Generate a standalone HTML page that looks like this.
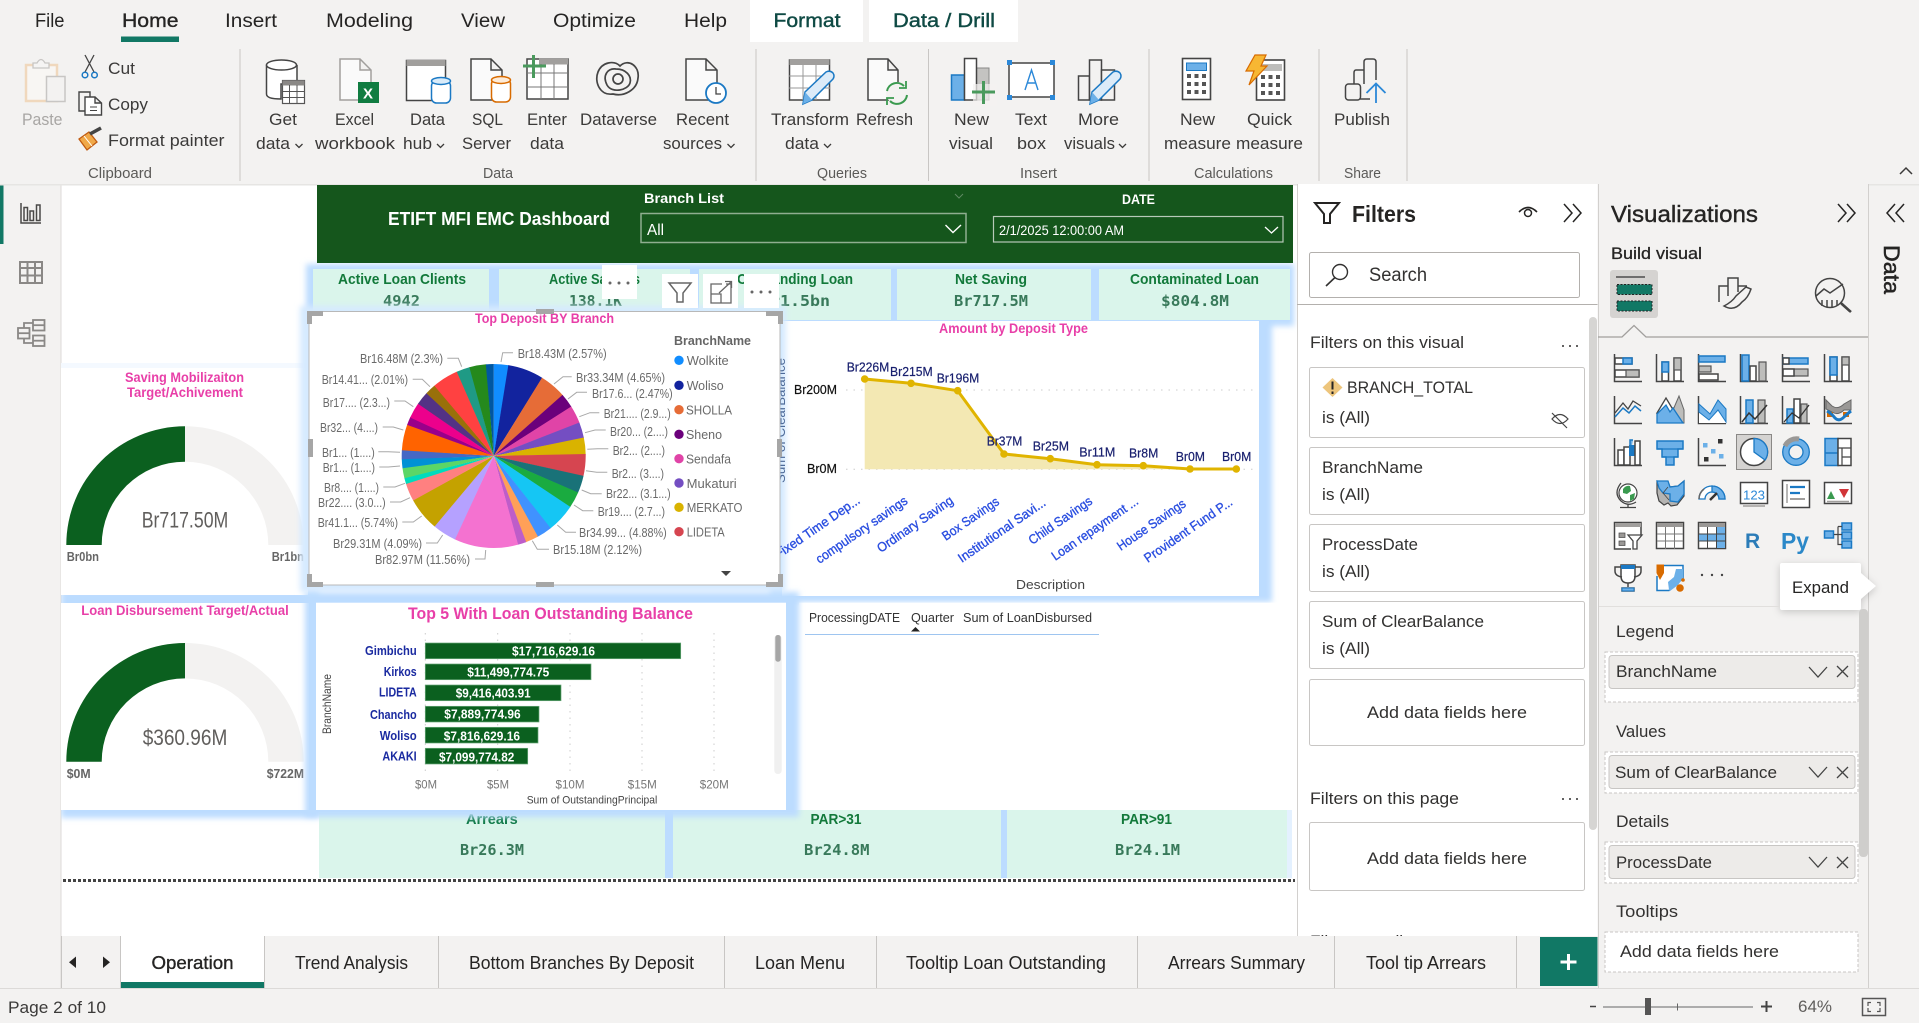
<!DOCTYPE html>
<html lang="en"><head><meta charset="utf-8"><title>ETIFT MFI EMC Dashboard - Power BI Desktop</title>
<style>
html,body{margin:0;padding:0;background:#fff;overflow:hidden;width:1919px;height:1023px}
svg{display:block;position:absolute;left:0;top:0}
text{font-family:"Liberation Sans",sans-serif;fill:#252423}
.sb{stroke:#252423;stroke-width:.35}
.p{fill:#e83fa8;font-weight:700}
.k{fill:#12793a;font-weight:700;font-size:15px}
.v{fill:#38795a;font-family:"DejaVu Sans Mono","Liberation Mono",monospace;font-weight:700;font-size:15px}
.l{fill:#6a6a6a;font-size:13px}
.n{fill:#19206f;font-size:13px;stroke:#19206f;stroke-width:.2}
.x{fill:#2a4ee0;font-size:13px;stroke:#2a4ee0;stroke-width:.35}
.y{fill:#1a2aa0;font-size:13px;font-weight:700}
.w{fill:#fff;font-size:13px;font-weight:700}
.f{font-size:17px;fill:#323130}
.r{font-size:16.5px;fill:#3b3a39}
.g{font-size:14.5px;fill:#5b5a58}
.s{fill:none;stroke:#444;stroke-width:1.5}
.b{fill:#6cb0e8;stroke:#1b79c4;stroke-width:1.5}
.a{fill:#bdbdbb;stroke:#555;stroke-width:1.2}
.h{fill:#fff;stroke:#444;stroke-width:1.5}
</style></head><body>
<svg width="1919" height="1023" viewBox="0 0 1919 1023" xmlns="http://www.w3.org/2000/svg">
<defs>
<filter id="gl" x="-10%" y="-10%" width="120%" height="120%"><feGaussianBlur stdDeviation="3"/></filter>
<clipPath id="cv"><rect x="61" y="184" width="1237" height="752"/></clipPath>
<clipPath id="fc"><rect x="1298" y="305" width="290" height="631"/></clipPath>
</defs>

<!-- base -->
<rect width="1919" height="1023" fill="#f3f2f1"/>
<rect x="61" y="184" width="1237" height="752" fill="#fff"/>
<rect x="60.5" y="184" width="1" height="804" fill="#dcdad8"/>
<rect x="0" y="184" width="3.500" height="60" fill="#117865"/>

<!-- left rail icons -->
<g fill="none" stroke="#4a4948" stroke-width="1.500">
<path d="M21 203V223H41"/>
<rect x="24" y="207.500" width="3.500" height="13"/><rect x="30" y="211" width="3.500" height="9.500"/><rect x="36.500" y="205" width="3.500" height="15.500"/>
</g>
<g fill="none" stroke="#8a8886" stroke-width="2">
<rect x="20" y="262" width="22" height="21"/><path d="M20 268H42M20 275.500H42M27.500 262V283M35 262V283"/>
</g>
<g fill="none" stroke="#8a8886" stroke-width="1.800">
<rect x="18" y="328" width="11.500" height="10.500"/><path d="M18 333.200H29.500"/>
<rect x="33" y="320" width="11.500" height="10.500"/><path d="M33 325.200H44.500"/>
<rect x="33" y="335.500" width="11.500" height="10.500"/><path d="M33 340.700H44.500"/>
<path d="M24 328V323H33M24 338.500V343H33"/>
</g>

<!-- ribbon -->
<rect x="0" y="0" width="1919" height="184" fill="#f3f2f1"/>
<rect x="0" y="184" width="1919" height="1.500" fill="#e6e5e3"/>
<rect x="750" y="0" width="113" height="42" fill="#fff"/>
<rect x="869" y="0" width="149" height="42" fill="#fff"/>
<rect x="121" y="36.500" width="58" height="5.500" fill="#117865"/>
<g font-size="19">
<text x="35" y="27" textLength="29.500" lengthAdjust="spacingAndGlyphs">File</text>
<text x="122" y="27" textLength="56.500" lengthAdjust="spacingAndGlyphs" class="sb">Home</text>
<text x="225" y="27" textLength="52" lengthAdjust="spacingAndGlyphs">Insert</text>
<text x="326" y="27" textLength="87" lengthAdjust="spacingAndGlyphs">Modeling</text>
<text x="461" y="27" textLength="44" lengthAdjust="spacingAndGlyphs">View</text>
<text x="553" y="27" textLength="83" lengthAdjust="spacingAndGlyphs">Optimize</text>
<text x="684" y="27" textLength="43" lengthAdjust="spacingAndGlyphs">Help</text>
<text x="773.500" y="27" textLength="67" lengthAdjust="spacingAndGlyphs" style="fill:#0f4a44;stroke:#0f4a44;stroke-width:.4">Format</text>
<text x="893" y="27" textLength="102" lengthAdjust="spacingAndGlyphs" style="fill:#0f4a44;stroke:#0f4a44;stroke-width:.4">Data / Drill</text>
</g>
<!-- ribbon separators -->
<g fill="#c8c6c4"><rect x="239.500" y="49" width="1" height="132"/><rect x="755.500" y="49" width="1" height="132"/><rect x="928" y="49" width="1" height="132"/><rect x="1148.500" y="49" width="1" height="132"/><rect x="1318.500" y="49" width="1" height="132"/><rect x="1406.500" y="49" width="1" height="132"/></g>
<!-- ribbon labels -->
<text x="22" y="125" class="r" textLength="40.500" lengthAdjust="spacingAndGlyphs" style="fill:#a8a6a4">Paste</text>
<text x="108" y="74" class="r" textLength="27" lengthAdjust="spacingAndGlyphs">Cut</text>
<text x="108" y="110" class="r" textLength="40" lengthAdjust="spacingAndGlyphs">Copy</text>
<text x="108" y="146" class="r" textLength="116.500" lengthAdjust="spacingAndGlyphs">Format painter</text>
<text x="269" y="125" class="r" textLength="28" lengthAdjust="spacingAndGlyphs">Get</text>
<text x="256" y="149" class="r" textLength="34" lengthAdjust="spacingAndGlyphs">data</text>
<text x="335" y="125" class="r" textLength="39" lengthAdjust="spacingAndGlyphs">Excel</text>
<text x="315" y="149" class="r" textLength="80" lengthAdjust="spacingAndGlyphs">workbook</text>
<text x="410" y="125" class="r" textLength="35" lengthAdjust="spacingAndGlyphs">Data</text>
<text x="403" y="149" class="r" textLength="29" lengthAdjust="spacingAndGlyphs">hub</text>
<text x="472" y="125" class="r" textLength="31" lengthAdjust="spacingAndGlyphs">SQL</text>
<text x="462" y="149" class="r" textLength="49" lengthAdjust="spacingAndGlyphs">Server</text>
<text x="527" y="125" class="r" textLength="40" lengthAdjust="spacingAndGlyphs">Enter</text>
<text x="530" y="149" class="r" textLength="34" lengthAdjust="spacingAndGlyphs">data</text>
<text x="580" y="125" class="r" textLength="77" lengthAdjust="spacingAndGlyphs">Dataverse</text>
<text x="676" y="125" class="r" textLength="53" lengthAdjust="spacingAndGlyphs">Recent</text>
<text x="663" y="149" class="r" textLength="59" lengthAdjust="spacingAndGlyphs">sources</text>
<text x="771" y="125" class="r" textLength="78" lengthAdjust="spacingAndGlyphs">Transform</text>
<text x="785" y="149" class="r" textLength="34" lengthAdjust="spacingAndGlyphs">data</text>
<text x="856" y="125" class="r" textLength="57" lengthAdjust="spacingAndGlyphs">Refresh</text>
<text x="954" y="125" class="r" textLength="35" lengthAdjust="spacingAndGlyphs">New</text>
<text x="949" y="149" class="r" textLength="44" lengthAdjust="spacingAndGlyphs">visual</text>
<text x="1015" y="125" class="r" textLength="32" lengthAdjust="spacingAndGlyphs">Text</text>
<text x="1017" y="149" class="r" textLength="29" lengthAdjust="spacingAndGlyphs">box</text>
<text x="1078" y="125" class="r" textLength="41" lengthAdjust="spacingAndGlyphs">More</text>
<text x="1064" y="149" class="r" textLength="51" lengthAdjust="spacingAndGlyphs">visuals</text>
<text x="1180" y="125" class="r" textLength="35" lengthAdjust="spacingAndGlyphs">New</text>
<text x="1164" y="149" class="r" textLength="67" lengthAdjust="spacingAndGlyphs">measure</text>
<text x="1247" y="125" class="r" textLength="45" lengthAdjust="spacingAndGlyphs">Quick</text>
<text x="1236" y="149" class="r" textLength="67" lengthAdjust="spacingAndGlyphs">measure</text>
<text x="1334" y="125" class="r" textLength="56" lengthAdjust="spacingAndGlyphs">Publish</text>
<text x="88" y="178" class="g" textLength="64" lengthAdjust="spacingAndGlyphs">Clipboard</text>
<text x="483" y="178" class="g" textLength="30" lengthAdjust="spacingAndGlyphs">Data</text>
<text x="817" y="178" class="g" textLength="50" lengthAdjust="spacingAndGlyphs">Queries</text>
<text x="1020" y="178" class="g" textLength="37" lengthAdjust="spacingAndGlyphs">Insert</text>
<text x="1194" y="178" class="g" textLength="79" lengthAdjust="spacingAndGlyphs">Calculations</text>
<text x="1344" y="178" class="g" textLength="37" lengthAdjust="spacingAndGlyphs">Share</text>
<!-- small chevrons -->
<g fill="none" stroke="#3b3a39" stroke-width="1.300">
<path d="M295.500 144L299 147.500L302.500 144M437 144L440.500 147.500L444 144M727.500 144L731 147.500L734.500 144M824 144L827.500 147.500L831 144M1119 144L1122.500 147.500L1126 144"/>
<path d="M1900 174L1906 168L1912 174" stroke-width="1.500"/>
</g>
<!-- ribbon icons -->
<g>
<!-- paste -->
<rect x="26" y="65" width="31" height="36" fill="#f8f6f3" stroke="#f0d8bd" stroke-width="2.500"/>
<path d="M33 68V63H37Q41 56 45 63H49V68Z" fill="#f5f4f3" stroke="#c8c6c4" stroke-width="1.300"/>
<rect x="46.500" y="76.500" width="18.500" height="25" fill="#f3f2f1" stroke="#c8c6c4" stroke-width="1.500"/>
<!-- cut -->
<path d="M85 55L94 72M94 55L85 72" stroke="#444" stroke-width="1.300" fill="none"/>
<circle cx="85" cy="75" r="2.800" fill="none" stroke="#1b79c4" stroke-width="1.500"/><circle cx="94.500" cy="75" r="2.800" fill="none" stroke="#1b79c4" stroke-width="1.500"/>
<!-- copy -->
<path d="M86 111H79V92H90V97" fill="none" stroke="#444" stroke-width="1.400"/>
<path d="M85 97H95L101.500 103V115H85Z M95 97V103H101.500" fill="#fff" stroke="#444" stroke-width="1.400"/>
<path d="M90 107H97M90 110.500H97" stroke="#444" stroke-width="1.100"/>
<!-- painter -->
<path d="M79 139L89 132L97 142L87 150Z" fill="#f0a848" stroke="#c05a10" stroke-width="1.300"/><path d="M84 136L92 146" stroke="#fff" stroke-width="1"/>
<path d="M90 134L101 128" stroke="#444" stroke-width="3.500"/>
<!-- get data -->
<path d="M266.500 65V94Q266.500 99 281 99V84H297V65" fill="#fff" stroke="#444" stroke-width="1.500"/>
<ellipse cx="281.500" cy="65" rx="15" ry="5" fill="#fff" stroke="#444" stroke-width="1.500"/>
<rect x="282.500" y="80.500" width="22" height="23" fill="#fff" stroke="#555" stroke-width="1.200"/><rect x="282.500" y="80.500" width="22" height="5" fill="#8a8886"/>
<path d="M282.500 91.500H304.500M282.500 97.500H304.500M289.500 85V103M297 85V103" stroke="#555" stroke-width="1"/>
<!-- excel -->
<path d="M340 59H360L371 70V100H340Z M360 59V70H371" fill="#fafafa" stroke="#a19f9d" stroke-width="1.500"/>
<rect x="358" y="82" width="21" height="21" fill="#107c41"/>
<text x="363" y="98.500" font-size="15" style="fill:#fff;font-weight:700">X</text>
<!-- data hub -->
<rect x="406.500" y="60.500" width="39" height="40" fill="#fff" stroke="#444" stroke-width="1.500"/><rect x="406.500" y="60" width="39" height="6" fill="#a19f9d"/>
<rect x="431.500" y="81" width="19" height="22" rx="5" fill="#fff" stroke="#1b79c4" stroke-width="1.500"/><ellipse cx="441" cy="81" rx="9.500" ry="3.500" fill="#d9ebf9" stroke="#1b79c4" stroke-width="1.500"/>
<!-- sql -->
<path d="M471 59H491L502 70V100H471Z M491 59V70H502" fill="#fafafa" stroke="#444" stroke-width="1.500"/>
<rect x="491.500" y="79" width="19" height="23" rx="5" fill="#fff" stroke="#d86b00" stroke-width="1.500"/><ellipse cx="501" cy="80" rx="9.500" ry="3.500" fill="#fdebd8" stroke="#d86b00" stroke-width="1.500"/>
<!-- enter data -->
<rect x="527" y="59" width="41" height="40" fill="#fff" stroke="#444" stroke-width="1.500"/><rect x="539" y="58.500" width="29" height="6" fill="#a19f9d"/>
<path d="M527 73H568M527 87H568M541 64V99M554 64V99" stroke="#777" stroke-width="1"/>
<path d="M523 66H546M533.500 55V78" stroke="#4a9a5d" stroke-width="3"/>
<!-- dataverse -->
<g fill="none" stroke="#444" stroke-width="1.700">
<path d="M613 94C600 96 594 82 598 72C602 62 614 60 620 66C628 58 640 66 638 78C637 90 624 97 613 94Z"/>
<path d="M607 85C602 75 608 68 616 69C626 69 632 76 630 83C628 90 612 94 607 85Z"/>
<circle cx="618" cy="79" r="5"/>
</g>
<!-- recent -->
<path d="M686 59H706L717 70V100H686Z M706 59V70H717" fill="#fafafa" stroke="#444" stroke-width="1.500"/>
<circle cx="716" cy="93" r="10" fill="#fff" stroke="#1b79c4" stroke-width="1.800"/><path d="M716 87V94H721" fill="none" stroke="#444" stroke-width="1.300"/>
<!-- transform -->
<rect x="789.500" y="60" width="40" height="40" fill="#fff" stroke="#444" stroke-width="1.500"/><rect x="789.500" y="59" width="40" height="6" fill="#a19f9d"/>
<path d="M789 76H830M789 88H830M803 65V100M816 65V100" stroke="#999" stroke-width="1"/>
<path d="M803 104L805 92L826 72Q830 70 833 73Q835 76 833 79L812 100Z" fill="#dcebf8" stroke="#1b79c4" stroke-width="1.500"/><path d="M803 104L805 92L812 100Z" fill="#6cb0e8"/>
<!-- refresh -->
<path d="M868 59H888L898 70V100H868Z M888 59V70H898" fill="#fafafa" stroke="#444" stroke-width="1.500"/><circle cx="897" cy="93" r="11" fill="#f3f2f1"/>
<path d="M887 91A10 10 0 0 1 904 86M907 95A10 10 0 0 1 890 101" fill="none" stroke="#3a9a4f" stroke-width="2"/><path d="M906 81V88H899M887 105V98H894" fill="none" stroke="#3a9a4f" stroke-width="1.800"/>
<!-- new visual -->
<rect x="976" y="68" width="13" height="32" fill="#c4c3c1" stroke="#888" stroke-width="1"/><rect x="951.500" y="75" width="13" height="25" class="b"/>
<rect x="964.500" y="58.500" width="12" height="41.500" fill="#fff" stroke="#444" stroke-width="1.500"/>
<rect x="973" y="84" width="24" height="22" fill="#f3f2f1" opacity=".7"/><path d="M972 92H995M983.500 81V104" stroke="#4a9a5d" stroke-width="3"/>
<!-- text box -->
<rect x="1009" y="63" width="45" height="34" fill="#fff" stroke="#444" stroke-width="1.500"/>
<g fill="#2b88d8"><rect x="1007" y="60" width="5" height="5"/><rect x="1050" y="60" width="5" height="5"/><rect x="1007" y="95" width="5" height="5"/><rect x="1050" y="95" width="5" height="5"/></g>
<path d="M1025 90L1031.500 70L1038 90M1027 83H1036" fill="none" stroke="#2b88d8" stroke-width="1.400"/>
<!-- more visuals -->
<g fill="#f3f2f1" stroke="#444" stroke-width="1.500"><rect x="1078.500" y="76" width="11" height="24"/><rect x="1089.500" y="60" width="12" height="40"/><rect x="1101.500" y="70" width="13" height="30"/></g>
<path d="M1090 104L1092 92L1113 72Q1117 70 1120 73Q1122 76 1120 79L1099 100Z" fill="#dcebf8" stroke="#1b79c4" stroke-width="1.500"/><path d="M1090 104L1092 92L1099 100Z" fill="#6cb0e8"/>
<!-- new measure -->
<rect x="1182.500" y="58.500" width="28" height="41" fill="#fff" stroke="#444" stroke-width="1.600"/><rect x="1186.500" y="63" width="20" height="7.500" fill="#6cb0e8" stroke="#1b79c4"/>
<g fill="#555"><rect x="1187" y="74" width="4" height="4"/><rect x="1194.500" y="74" width="4" height="4"/><rect x="1202" y="74" width="4" height="4"/><rect x="1187" y="82" width="4" height="4"/><rect x="1194.500" y="82" width="4" height="4"/><rect x="1202" y="82" width="4" height="4"/><rect x="1187" y="90" width="4" height="4"/><rect x="1194.500" y="90" width="4" height="4"/><rect x="1202" y="90" width="4" height="4"/></g>
<!-- quick measure -->
<rect x="1256.500" y="60" width="28" height="40" fill="#fff" stroke="#444" stroke-width="1.600"/><rect x="1262" y="64" width="20" height="7" fill="#bdbdbb"/>
<g fill="#555"><rect x="1261" y="75" width="4" height="4"/><rect x="1268.500" y="75" width="4" height="4"/><rect x="1276" y="75" width="4" height="4"/><rect x="1261" y="83" width="4" height="4"/><rect x="1268.500" y="83" width="4" height="4"/><rect x="1276" y="83" width="4" height="4"/><rect x="1261" y="91" width="4" height="4"/><rect x="1268.500" y="91" width="4" height="4"/><rect x="1276" y="91" width="4" height="4"/></g>
<path d="M1255 55H1266L1261 66H1267L1249 85L1254 71H1246Z" fill="#f7b733" stroke="#d86b00" stroke-width="1.200"/>
<!-- publish -->
<path d="M1364 84V62Q1364 59 1367 59H1373Q1376 59 1376 62V80M1364 70H1356Q1354 70 1354 73V84" fill="none" stroke="#444" stroke-width="1.500"/>
<rect x="1345.500" y="84" width="15" height="16" rx="3" fill="#f3f2f1" stroke="#444" stroke-width="1.500"/><path d="M1360 99H1370" stroke="#444" stroke-width="1.500"/>
<path d="M1376 103V84M1366.500 93L1376 83.500L1385.500 93" fill="none" stroke="#2b88d8" stroke-width="1.800"/>
</g>

<!-- ============ CANVAS ============ -->
<g clip-path="url(#cv)">
<!-- glows underlying -->
<g filter="url(#gl)" fill="#bcdcff">
<rect x="306" y="264" width="988" height="62"/>
<rect x="770" y="316" width="502" height="286"/>
<rect x="61" y="590" width="258" height="228"/>
</g>
<rect x="61" y="368" width="247" height="227" fill="#fff"/>
<rect x="61" y="363" width="247" height="5" fill="#f4f9ff"/>
<rect x="61" y="603" width="248" height="207" fill="#fff"/>

<!-- gauges -->
<text x="125" y="382" class="p" font-size="14" textLength="119" lengthAdjust="spacingAndGlyphs">Saving Mobilizaiton</text>
<text x="127" y="397" class="p" font-size="14" textLength="116" lengthAdjust="spacingAndGlyphs">Target/Achivement</text>
<path d="M66.300 545A118.700 118.700 0 0 1 303.700 545H268.300A83.300 83.300 0 0 0 101.700 545Z" fill="#f3f2f1"/>
<path d="M66.300 545A118.700 118.700 0 0 1 185 426.300V461.700A83.300 83.300 0 0 0 101.700 545Z" fill="#0b601f"/>
<text x="141.700" y="527.500" font-size="22" style="fill:#605e5c" textLength="86.600" lengthAdjust="spacingAndGlyphs">Br717.50M</text>
<text x="66.700" y="561" font-size="12.500" style="fill:#666;font-weight:700" textLength="32.300" lengthAdjust="spacingAndGlyphs">Br0bn</text>
<text x="271.700" y="561" font-size="12.500" style="fill:#666;font-weight:700" textLength="32.300" lengthAdjust="spacingAndGlyphs">Br1bn</text>

<text x="81.300" y="615" class="p" font-size="14" textLength="207.400" lengthAdjust="spacingAndGlyphs">Loan Disbursement Target/Actual</text>
<path d="M66.300 761.700A118.700 118.700 0 0 1 303.700 761.700H268.300A83.300 83.300 0 0 0 101.700 761.700Z" fill="#f3f2f1"/>
<path d="M66.300 761.700A118.700 118.700 0 0 1 185 643V678.400A83.300 83.300 0 0 0 101.700 761.700Z" fill="#0b601f"/>
<text x="142.700" y="745" font-size="22" style="fill:#605e5c" textLength="84.600" lengthAdjust="spacingAndGlyphs">$360.96M</text>
<text x="66.700" y="778" font-size="12.500" style="fill:#666;font-weight:700" textLength="24" lengthAdjust="spacingAndGlyphs">$0M</text>
<text x="266.700" y="778" font-size="12.500" style="fill:#666;font-weight:700" textLength="37.300" lengthAdjust="spacingAndGlyphs">$722M</text>

<!-- header -->
<rect x="317" y="185" width="976" height="78" fill="#15561c"/>
<text x="388" y="225" font-size="18.500" style="fill:#fff;font-weight:700" textLength="222" lengthAdjust="spacingAndGlyphs">ETIFT MFI EMC Dashboard</text>
<text x="644" y="203" font-size="14" style="fill:#fff;font-weight:700" textLength="80" lengthAdjust="spacingAndGlyphs">Branch List</text>
<rect x="641" y="213.500" width="325" height="29" fill="none" stroke="#8fae90" stroke-width="1.500"/>
<text x="647" y="235" font-size="16" style="fill:#fff" textLength="17" lengthAdjust="spacingAndGlyphs">All</text>
<path d="M945.500 225L953 232.500L961 225" fill="none" stroke="#fff" stroke-width="1.400"/>
<path d="M955 194L959 198L963 194" fill="none" stroke="#5f8a63" stroke-width="1"/>
<text x="1122" y="204" font-size="14" style="fill:#fff;font-weight:700" textLength="33" lengthAdjust="spacingAndGlyphs">DATE</text>
<rect x="993.500" y="216.500" width="289.500" height="25.500" fill="none" stroke="#b7c9b8" stroke-width="1.200"/>
<text x="999" y="235" font-size="14" style="fill:#fff" textLength="125" lengthAdjust="spacingAndGlyphs">2/1/2025 12:00:00 AM</text>
<path d="M1265 227L1271.500 233L1278 227" fill="none" stroke="#fff" stroke-width="1.300"/>

<!-- KPI cards -->
<g fill="#daf5eb">
<rect x="313" y="269" width="176" height="51"/><rect x="499" y="269" width="191" height="51"/><rect x="699" y="269" width="192" height="51"/><rect x="897" y="269" width="194" height="51"/><rect x="1099" y="269" width="191" height="51"/>
</g>
<text x="338" y="284" class="k" textLength="128" lengthAdjust="spacingAndGlyphs">Active Loan Clients</text>
<text x="383" y="306" class="v" textLength="37" lengthAdjust="spacingAndGlyphs">4942</text>
<text x="549" y="284" class="k" textLength="91" lengthAdjust="spacingAndGlyphs">Active Savings</text>
<text x="569" y="306" class="v" textLength="53" lengthAdjust="spacingAndGlyphs">138.1K</text>
<text x="737" y="284" class="k" textLength="116" lengthAdjust="spacingAndGlyphs">Outstanding Loan</text>
<text x="760" y="306" class="v" textLength="70" lengthAdjust="spacingAndGlyphs">Br1.5bn</text>
<text x="955" y="284" class="k" textLength="72" lengthAdjust="spacingAndGlyphs">Net Saving</text>
<text x="954" y="306" class="v" textLength="74" lengthAdjust="spacingAndGlyphs">Br717.5M</text>
<text x="1130" y="284" class="k" textLength="129" lengthAdjust="spacingAndGlyphs">Contaminated Loan</text>
<text x="1161" y="306" class="v" textLength="68" lengthAdjust="spacingAndGlyphs">$804.8M</text>

<!-- line chart -->
<rect x="782" y="321" width="477" height="275" fill="#fff"/>
<text x="939" y="333" class="p" font-size="14" textLength="149" lengthAdjust="spacingAndGlyphs">Amount by Deposit Type</text>
<path d="M846 390H1253M846 469.300H1253" stroke="#ccc" stroke-width="1" stroke-dasharray="1.500 6"/>
<text x="794" y="394" font-size="13" style="fill:#111;stroke:#111;stroke-width:.2" textLength="43" lengthAdjust="spacingAndGlyphs">Br200M</text>
<text x="807" y="473" font-size="13" style="fill:#111;stroke:#111;stroke-width:.2" textLength="30" lengthAdjust="spacingAndGlyphs">Br0M</text>
<path d="M864.700 379L911 383.300L957.700 390.700L1004 454L1050.300 458.700L1097 464.700L1143.300 465.700L1190 469L1236.300 469V469.300H864.700Z" fill="#f3e8b3"/>
<path d="M864.700 379L911 383.300L957.700 390.700L1004 454L1050.300 458.700L1097 464.700L1143.300 465.700L1190 469L1236.300 469" fill="none" stroke="#e0b400" stroke-width="3"/>
<g fill="#e0b400"><circle cx="864.700" cy="379" r="3.800"/><circle cx="911" cy="383.300" r="3.800"/><circle cx="957.700" cy="390.700" r="3.800"/><circle cx="1004" cy="454" r="3.800"/><circle cx="1050.300" cy="458.700" r="3.800"/><circle cx="1097" cy="464.700" r="3.800"/><circle cx="1143.300" cy="465.700" r="3.800"/><circle cx="1190" cy="469" r="3.800"/><circle cx="1236.300" cy="469" r="3.800"/></g>
<text x="846.700" y="371.700" class="n" textLength="42.600" lengthAdjust="spacingAndGlyphs">Br226M</text>
<text x="890" y="376" class="n" textLength="42.700" lengthAdjust="spacingAndGlyphs">Br215M</text>
<text x="936.700" y="382.700" class="n" textLength="42.600" lengthAdjust="spacingAndGlyphs">Br196M</text>
<text x="986.700" y="445.700" class="n" textLength="35.600" lengthAdjust="spacingAndGlyphs">Br37M</text>
<text x="1032.700" y="450.700" class="n" textLength="36.300" lengthAdjust="spacingAndGlyphs">Br25M</text>
<text x="1079.300" y="456.700" class="n" textLength="36" lengthAdjust="spacingAndGlyphs">Br11M</text>
<text x="1129" y="457.700" class="n" textLength="29.300" lengthAdjust="spacingAndGlyphs">Br8M</text>
<text x="1175.700" y="461" class="n" textLength="29.300" lengthAdjust="spacingAndGlyphs">Br0M</text>
<text x="1222" y="461" class="n" textLength="29.300" lengthAdjust="spacingAndGlyphs">Br0M</text>
<text transform="translate(819.500 564) rotate(-34.500)" class="x" textLength="108" lengthAdjust="spacingAndGlyphs">compulsory savings</text>
<text transform="translate(880.800 553) rotate(-34.500)" class="x" textLength="89" lengthAdjust="spacingAndGlyphs">Ordinary Saving</text>
<text transform="translate(945.800 541) rotate(-34.500)" class="x" textLength="66" lengthAdjust="spacingAndGlyphs">Box Savings</text>
<text transform="translate(961.800 563) rotate(-34.500)" class="x" textLength="103" lengthAdjust="spacingAndGlyphs">Institutional Savi...</text>
<text transform="translate(1032.300 545) rotate(-34.500)" class="x" textLength="74" lengthAdjust="spacingAndGlyphs">Child Savings</text>
<text transform="translate(1055.200 561) rotate(-34.500)" class="x" textLength="102" lengthAdjust="spacingAndGlyphs">Loan repayment ...</text>
<text transform="translate(1120.800 551) rotate(-34.500)" class="x" textLength="80" lengthAdjust="spacingAndGlyphs">House Savings</text>
<text transform="translate(1147.800 563) rotate(-34.500)" class="x" textLength="104" lengthAdjust="spacingAndGlyphs">Provident Fund P...</text>
<text x="1016" y="589" font-size="13" style="fill:#444" textLength="69" lengthAdjust="spacingAndGlyphs">Description</text>

<!-- bottom KPI row -->
<g fill="#daf5eb"><rect x="319" y="810" width="346" height="68"/><rect x="673" y="810" width="328" height="68"/><rect x="1007" y="810" width="280" height="68"/></g>
<rect x="665" y="810" width="8" height="68" fill="#bcdcff"/><rect x="1001" y="810" width="6" height="68" fill="#bcdcff"/><rect x="1287" y="810" width="5" height="68" fill="#e4f1ff"/>
<text x="466" y="824" class="k" style="fill:#107a48" textLength="51.700" lengthAdjust="spacingAndGlyphs">Arrears</text>
<text x="460" y="855" class="v" textLength="64" lengthAdjust="spacingAndGlyphs">Br26.3M</text>
<text x="810.500" y="824" class="k" textLength="51" lengthAdjust="spacingAndGlyphs">PAR&gt;31</text>
<text x="804" y="855" class="v" textLength="65.500" lengthAdjust="spacingAndGlyphs">Br24.8M</text>
<text x="1121" y="824" class="k" textLength="51" lengthAdjust="spacingAndGlyphs">PAR&gt;91</text>
<text x="1115" y="855" class="v" textLength="65" lengthAdjust="spacingAndGlyphs">Br24.1M</text>
<path d="M63 880.500H1295" stroke="#444" stroke-width="3" stroke-dasharray="3 2"/>

<!-- table visual -->
<rect x="799" y="602.700" width="499" height="207.300" fill="#fff"/>
<text x="809" y="622" font-size="12.500" style="fill:#333" textLength="91" lengthAdjust="spacingAndGlyphs">ProcessingDATE</text>
<text x="911" y="622" font-size="12.500" style="fill:#333" textLength="43" lengthAdjust="spacingAndGlyphs">Quarter</text>
<text x="963" y="622" font-size="12.500" style="fill:#333" textLength="129" lengthAdjust="spacingAndGlyphs">Sum of LoanDisbursed</text>
<path d="M911 631.500L915.500 627L920 631.500Z" fill="#222"/>
<rect x="805" y="634" width="294" height="1" fill="#9ec5f0"/>

<!-- bar chart -->
<g filter="url(#gl)" fill="#bcdcff"><rect x="305" y="592" width="494" height="225"/></g>
<rect x="316" y="602.700" width="470" height="207.300" fill="#fff"/>
<text x="408" y="619" class="p" font-size="17" textLength="285" lengthAdjust="spacingAndGlyphs">Top 5 With Loan Outstanding Balance</text>
<text transform="translate(331 734) rotate(-90)" font-size="12" style="fill:#444" textLength="60" lengthAdjust="spacingAndGlyphs">BranchName</text>
<path d="M425.300 633V773M497.700 633V773M570 633V773M642 633V773M714 633V773" stroke="#ccc" stroke-dasharray="1.500 5"/>
<g fill="#0b601f" stroke="#6aa97a" stroke-width=".7">
<rect x="425.300" y="643" width="255.400" height="15.700"/><rect x="425.300" y="664" width="165.700" height="15.700"/><rect x="425.300" y="685" width="135.700" height="15.700"/><rect x="425.300" y="706.300" width="113.700" height="15.700"/><rect x="425.300" y="727.300" width="112.700" height="15.700"/><rect x="425.300" y="748.300" width="102.400" height="15.700"/>
</g>
<text x="512" y="655.700" class="w" textLength="83" lengthAdjust="spacingAndGlyphs">$17,716,629.16</text>
<text x="467.300" y="676.700" class="w" textLength="82" lengthAdjust="spacingAndGlyphs">$11,499,774.75</text>
<text x="455.700" y="697.700" class="w" textLength="75" lengthAdjust="spacingAndGlyphs">$9,416,403.91</text>
<text x="444.300" y="718.700" class="w" textLength="76.400" lengthAdjust="spacingAndGlyphs">$7,889,774.96</text>
<text x="443.700" y="740.700" class="w" textLength="76.300" lengthAdjust="spacingAndGlyphs">$7,816,629.16</text>
<text x="439" y="761.700" class="w" textLength="75.300" lengthAdjust="spacingAndGlyphs">$7,099,774.82</text>
<text x="365" y="655" class="y" textLength="51.700" lengthAdjust="spacingAndGlyphs">Gimbichu</text>
<text x="383.700" y="676" class="y" textLength="33" lengthAdjust="spacingAndGlyphs">Kirkos</text>
<text x="379" y="696.700" class="y" textLength="37.700" lengthAdjust="spacingAndGlyphs">LIDETA</text>
<text x="370" y="719" class="y" textLength="46.700" lengthAdjust="spacingAndGlyphs">Chancho</text>
<text x="379.700" y="740" class="y" textLength="37" lengthAdjust="spacingAndGlyphs">Woliso</text>
<text x="382.400" y="760.700" class="y" textLength="34.300" lengthAdjust="spacingAndGlyphs">AKAKI</text>
<g font-size="12">
<text x="415" y="788.300" style="fill:#777" textLength="22" lengthAdjust="spacingAndGlyphs">$0M</text>
<text x="487" y="788.300" style="fill:#777" textLength="22" lengthAdjust="spacingAndGlyphs">$5M</text>
<text x="555.500" y="788.300" style="fill:#777" textLength="29" lengthAdjust="spacingAndGlyphs">$10M</text>
<text x="627.800" y="788.300" style="fill:#777" textLength="29" lengthAdjust="spacingAndGlyphs">$15M</text>
<text x="699.800" y="788.300" style="fill:#777" textLength="29" lengthAdjust="spacingAndGlyphs">$20M</text>
</g>
<text x="526.700" y="803.300" font-size="11" style="fill:#444" textLength="130.600" lengthAdjust="spacingAndGlyphs">Sum of OutstandingPrincipal</text>
<rect x="774.300" y="635" width="7.400" height="139" rx="3.500" fill="#f0f0f0"/><rect x="775.300" y="635" width="5.400" height="26.700" rx="2.500" fill="#a6a6a6"/>

<!-- pie visual -->
<g filter="url(#gl)" fill="#d6eaff"><rect x="300" y="306" width="486" height="286"/></g>
<text transform="translate(785 483) rotate(-90)" font-size="13" style="fill:#4d6a99" textLength="125" lengthAdjust="spacingAndGlyphs">Sum of ClearBalance</text>
<text transform="translate(778.500 559) rotate(-34.500)" class="x" textLength="100" lengthAdjust="spacingAndGlyphs">Fixed Time Dep...</text>
<rect x="309" y="311.500" width="471" height="273.500" fill="#fff" stroke="#b8b8b8" stroke-width="1"/>
<text x="475" y="323" class="p" font-size="14" textLength="139" lengthAdjust="spacingAndGlyphs">Top Deposit BY Branch</text>
<g fill="none" stroke-width="92" transform="rotate(-90 493.700 456)">
<circle cx="493.700" cy="456" r="46" pathLength="360" stroke="#118dff" stroke-dasharray="9.500 360" stroke-dashoffset="0"/>
<circle cx="493.700" cy="456" r="46" pathLength="360" stroke="#12239e" stroke-dasharray="22.700 360" stroke-dashoffset="-9.200"/>
<circle cx="493.700" cy="456" r="46" pathLength="360" stroke="#e66c37" stroke-dasharray="17 360" stroke-dashoffset="-31.700"/>
<circle cx="493.700" cy="456" r="46" pathLength="360" stroke="#6b007b" stroke-dasharray="9.300 360" stroke-dashoffset="-48.400"/>
<circle cx="493.700" cy="456" r="46" pathLength="360" stroke="#e044a7" stroke-dasharray="11.500 360" stroke-dashoffset="-57.400"/>
<circle cx="493.700" cy="456" r="46" pathLength="360" stroke="#744ec2" stroke-dasharray="10.100 360" stroke-dashoffset="-68.600"/>
<circle cx="493.700" cy="456" r="46" pathLength="360" stroke="#d9b300" stroke-dasharray="10.600 360" stroke-dashoffset="-78.400"/>
<circle cx="493.700" cy="456" r="46" pathLength="360" stroke="#d64550" stroke-dasharray="14.100 360" stroke-dashoffset="-88.700"/>
<circle cx="493.700" cy="456" r="46" pathLength="360" stroke="#197278" stroke-dasharray="11.200 360" stroke-dashoffset="-102.500"/>
<circle cx="493.700" cy="456" r="46" pathLength="360" stroke="#1aab40" stroke-dasharray="10.500 360" stroke-dashoffset="-113.400"/>
<circle cx="493.700" cy="456" r="46" pathLength="360" stroke="#15c6f4" stroke-dasharray="18.400 360" stroke-dashoffset="-123.600"/>
<circle cx="493.700" cy="456" r="46" pathLength="360" stroke="#4092ff" stroke-dasharray="9.800 360" stroke-dashoffset="-141.700"/>
<circle cx="493.700" cy="456" r="46" pathLength="360" stroke="#ffa058" stroke-dasharray="8.400 360" stroke-dashoffset="-151.200"/>
<circle cx="493.700" cy="456" r="46" pathLength="360" stroke="#be5dc9" stroke-dasharray="5.500 360" stroke-dashoffset="-159.300"/>
<circle cx="493.700" cy="456" r="46" pathLength="360" stroke="#f472d0" stroke-dasharray="40.700 360" stroke-dashoffset="-164.500"/>
<circle cx="493.700" cy="456" r="46" pathLength="360" stroke="#b5a1ff" stroke-dasharray="15.400 360" stroke-dashoffset="-204.900"/>
<circle cx="493.700" cy="456" r="46" pathLength="360" stroke="#c4a200" stroke-dasharray="21.300 360" stroke-dashoffset="-220"/>
<circle cx="493.700" cy="456" r="46" pathLength="360" stroke="#ff8080" stroke-dasharray="11.500 360" stroke-dashoffset="-241"/>
<circle cx="493.700" cy="456" r="46" pathLength="360" stroke="#00dbbc" stroke-dasharray="4 360" stroke-dashoffset="-252.200"/>
<circle cx="493.700" cy="456" r="46" pathLength="360" stroke="#5bd667" stroke-dasharray="6.700 360" stroke-dashoffset="-255.900"/>
<circle cx="493.700" cy="456" r="46" pathLength="360" stroke="#0091d5" stroke-dasharray="5.900 360" stroke-dashoffset="-262.300"/>
<circle cx="493.700" cy="456" r="46" pathLength="360" stroke="#4668c5" stroke-dasharray="6.100 360" stroke-dashoffset="-267.900"/>
<circle cx="493.700" cy="456" r="46" pathLength="360" stroke="#ff6300" stroke-dasharray="16.400 360" stroke-dashoffset="-273.700"/>
<circle cx="493.700" cy="456" r="46" pathLength="360" stroke="#99008a" stroke-dasharray="5.300 360" stroke-dashoffset="-289.800"/>
<circle cx="493.700" cy="456" r="46" pathLength="360" stroke="#ec008c" stroke-dasharray="10.100 360" stroke-dashoffset="-294.800"/>
<circle cx="493.700" cy="456" r="46" pathLength="360" stroke="#533285" stroke-dasharray="8.700 360" stroke-dashoffset="-304.600"/>
<circle cx="493.700" cy="456" r="46" pathLength="360" stroke="#99700a" stroke-dasharray="7.100 360" stroke-dashoffset="-313"/>
<circle cx="493.700" cy="456" r="46" pathLength="360" stroke="#ff4141" stroke-dasharray="16.800 360" stroke-dashoffset="-319.800"/>
<circle cx="493.700" cy="456" r="46" pathLength="360" stroke="#1f9a85" stroke-dasharray="8.600 360" stroke-dashoffset="-336.300"/>
<circle cx="493.700" cy="456" r="46" pathLength="360" stroke="#25891c" stroke-dasharray="10.700 360" stroke-dashoffset="-344.600"/>
<circle cx="493.700" cy="456" r="46" pathLength="360" stroke="#0057a2" stroke-dasharray="5 360" stroke-dashoffset="-355"/>
</g>
<!-- pie leaders -->
<g fill="none" stroke="#a8a8a8" stroke-width="1">
<path d="M501 362L502.700 352.700H513M554 384L563 376.700H571.700M568 399L576.700 392.300H587M579.300 416.700L590 412.700H599.300M585 432.700L595 430H605.700M587.300 449.300L597.700 448.700H608.300M586 470.700L596.700 472.300H607.300M581.700 490L590.700 493.700H601.700M574 505L582.700 510.700H593.300M557.300 525L565.700 532.300H576M532.300 540.700L537.300 549.300H549M485.700 550L485 559H475M442.700 535L437.300 543H426M421.700 516L413.300 522H402.300M410 497.700L400.700 502H390M405 483.300L395 487H383.300M400 466L388.300 467H379.300M400 452.300L388.300 451.700H378.300M403.300 430L393.300 427H382.700M413.300 406.700L405 401H394.300M430 386.700L422.300 379.300H412.700M461.700 366.700L458.300 358.300H447.300"/>
</g>
<!-- pie labels -->
<text x="517.700" y="358" class="l" textLength="89" lengthAdjust="spacingAndGlyphs">Br18.43M (2.57%)</text>
<text x="576" y="382" class="l" textLength="89" lengthAdjust="spacingAndGlyphs">Br33.34M (4.65%)</text>
<text x="592" y="398" class="l" textLength="80.700" lengthAdjust="spacingAndGlyphs">Br17.6... (2.47%)</text>
<text x="603.700" y="418" class="l" textLength="67" lengthAdjust="spacingAndGlyphs">Br21.... (2.9...)</text>
<text x="610" y="436" class="l" textLength="58" lengthAdjust="spacingAndGlyphs">Br20... (2....)</text>
<text x="612.700" y="455" class="l" textLength="52.300" lengthAdjust="spacingAndGlyphs">Br2... (2....)</text>
<text x="611.700" y="478" class="l" textLength="52.300" lengthAdjust="spacingAndGlyphs">Br2... (3....)</text>
<text x="606" y="498" class="l" textLength="64.700" lengthAdjust="spacingAndGlyphs">Br22... (3.1...)</text>
<text x="597.700" y="516" class="l" textLength="67.300" lengthAdjust="spacingAndGlyphs">Br19.... (2.7...)</text>
<text x="579" y="537" class="l" textLength="87.700" lengthAdjust="spacingAndGlyphs">Br34.99... (4.88%)</text>
<text x="553" y="554" class="l" textLength="89" lengthAdjust="spacingAndGlyphs">Br15.18M (2.12%)</text>
<text x="375" y="564" class="l" textLength="95" lengthAdjust="spacingAndGlyphs">Br82.97M (11.56%)</text>
<text x="333" y="548" class="l" textLength="89" lengthAdjust="spacingAndGlyphs">Br29.31M (4.09%)</text>
<text x="317.700" y="527" class="l" textLength="80.300" lengthAdjust="spacingAndGlyphs">Br41.1... (5.74%)</text>
<text x="318" y="507" class="l" textLength="67.700" lengthAdjust="spacingAndGlyphs">Br22.... (3.0...)</text>
<text x="324" y="492" class="l" textLength="55" lengthAdjust="spacingAndGlyphs">Br8.... (1....)</text>
<text x="322.700" y="472" class="l" textLength="52.300" lengthAdjust="spacingAndGlyphs">Br1... (1....)</text>
<text x="322" y="457" class="l" textLength="52.700" lengthAdjust="spacingAndGlyphs">Br1... (1....)</text>
<text x="320" y="432" class="l" textLength="58" lengthAdjust="spacingAndGlyphs">Br32... (4....)</text>
<text x="322.700" y="407" class="l" textLength="67.300" lengthAdjust="spacingAndGlyphs">Br17.... (2.3...)</text>
<text x="321.700" y="384" class="l" textLength="86.300" lengthAdjust="spacingAndGlyphs">Br14.41... (2.01%)</text>
<text x="360" y="363" class="l" textLength="83" lengthAdjust="spacingAndGlyphs">Br16.48M (2.3%)</text>
<!-- legend -->
<text x="674" y="345" font-size="13" style="fill:#666;font-weight:700" textLength="77" lengthAdjust="spacingAndGlyphs">BranchName</text>
<circle cx="679" cy="360.300" r="4.700" fill="#118dff"/><text x="686.700" y="365" class="l" textLength="42" lengthAdjust="spacingAndGlyphs">Wolkite</text>
<circle cx="679" cy="385.300" r="4.700" fill="#12239e"/><text x="686.700" y="390" class="l" textLength="37" lengthAdjust="spacingAndGlyphs">Woliso</text>
<circle cx="679" cy="409.700" r="4.700" fill="#e66c37"/><text x="686" y="414.500" class="l" textLength="46" lengthAdjust="spacingAndGlyphs">SHOLLA</text>
<circle cx="679" cy="434.300" r="4.700" fill="#6b007b"/><text x="686" y="439" class="l" textLength="36" lengthAdjust="spacingAndGlyphs">Sheno</text>
<circle cx="679" cy="458.700" r="4.700" fill="#e044a7"/><text x="686" y="463.500" class="l" textLength="45" lengthAdjust="spacingAndGlyphs">Sendafa</text>
<circle cx="679" cy="483" r="4.700" fill="#744ec2"/><text x="686.700" y="488" class="l" textLength="50" lengthAdjust="spacingAndGlyphs">Mukaturi</text>
<circle cx="679" cy="507.300" r="4.700" fill="#d9b300"/><text x="686.700" y="512" class="l" textLength="55.700" lengthAdjust="spacingAndGlyphs">MERKATO</text>
<circle cx="679" cy="531.700" r="4.700" fill="#d64550"/><text x="686.700" y="536.500" class="l" textLength="38" lengthAdjust="spacingAndGlyphs">LIDETA</text>
<path d="M721 571H731L726 576Z" fill="#444"/>
<!-- handles -->
<g fill="none" stroke="#a6a6a6" stroke-width="5">
<path d="M323 313.500H309.500V324"/><path d="M766 313.500H780.500V324"/><path d="M323 584.500H309.500V574"/><path d="M766 584.500H780.500V574"/>
<path d="M536 311.500H554M536 584.500H554M310.500 439V457M779.500 439V457"/>
</g>

<!-- visual toolbars -->
<g fill="#fff"><rect x="602" y="265" width="35" height="34"/><rect x="662" y="274" width="36" height="34"/><rect x="703" y="274" width="35" height="34"/><rect x="744" y="274" width="35" height="34"/></g>
<g fill="#666"><circle cx="610" cy="283" r="1.500"/><circle cx="619" cy="283" r="1.500"/><circle cx="628" cy="283" r="1.500"/><circle cx="752" cy="292" r="1.500"/><circle cx="761" cy="292" r="1.500"/><circle cx="770" cy="292" r="1.500"/></g>
<path d="M669 283H691L683 293V302L677 302V293Z" fill="none" stroke="#666" stroke-width="1.500"/>
<path d="M711 296V284H722M711 294H721V303H711ZM721 294V303H731V284H726M719 293L731 282M725 281.500H731.500V288" fill="none" stroke="#666" stroke-width="1.300"/>
</g>

<!-- ============ Filters pane ============ -->
<rect x="1297" y="184" width="301" height="752" fill="#fff"/>
<rect x="1297" y="184" width="1" height="752" fill="#d2d0ce"/>
<path d="M1315 203H1339L1330 214V223H1324V214Z" fill="none" stroke="#252423" stroke-width="2"/>
<text x="1352" y="222" font-size="23" style="font-weight:700" textLength="64" lengthAdjust="spacingAndGlyphs">Filters</text>
<path d="M1519 212Q1528 203 1537 212" fill="none" stroke="#252423" stroke-width="1.600"/><circle cx="1528" cy="213" r="3.500" fill="none" stroke="#252423" stroke-width="1.500"/>
<path d="M1564 204L1572 213L1564 222M1573 204L1581 213L1573 222" fill="none" stroke="#252423" stroke-width="1.500"/>
<rect x="1309.500" y="252.500" width="270" height="45" rx="2" fill="#fff" stroke="#b3b0ad"/>
<circle cx="1340" cy="272" r="7.500" fill="none" stroke="#323130" stroke-width="1.400"/><path d="M1335 277.500L1326 286" stroke="#323130" stroke-width="1.600"/>
<text x="1369" y="281" font-size="19" style="fill:#323130" textLength="58" lengthAdjust="spacingAndGlyphs">Search</text>
<rect x="1297" y="304" width="301" height="1" fill="#b3b0ad"/>
<g clip-path="url(#fc)">
<text x="1310" y="348" class="f" textLength="154" lengthAdjust="spacingAndGlyphs">Filters on this visual</text>
<g fill="#323130"><circle cx="1563" cy="346" r="1"/><circle cx="1570" cy="346" r="1"/><circle cx="1577" cy="346" r="1"/><circle cx="1563" cy="799" r="1"/><circle cx="1570" cy="799" r="1"/><circle cx="1577" cy="799" r="1"/></g>
<g fill="#fff" stroke="#c8c6c4">
<rect x="1309.500" y="367.500" width="275" height="70" rx="2"/>
<rect x="1309.500" y="447.500" width="275" height="67" rx="2"/>
<rect x="1309.500" y="524.500" width="275" height="67" rx="2"/>
<rect x="1309.500" y="601.500" width="275" height="67" rx="2"/>
<rect x="1309.500" y="679.500" width="275" height="66" rx="2"/>
<rect x="1309.500" y="822.500" width="275" height="68" rx="2"/>
</g>
<path d="M1332.500 378L1342.500 387.500L1332.500 397L1322.500 387.500Z" fill="#edc57c"/><path d="M1332.500 381.500V389.500M1332.500 391.500V394" stroke="#252423" stroke-width="2"/>
<text x="1347" y="393" class="f" textLength="126" lengthAdjust="spacingAndGlyphs">BRANCH_TOTAL</text>
<text x="1322" y="423" class="f" textLength="48" lengthAdjust="spacingAndGlyphs">is (All)</text>
<path d="M1552 419Q1560 410 1568 419Q1560 428 1552 419ZM1552 413L1567 428" fill="none" stroke="#444" stroke-width="1.200"/>
<text x="1322" y="473" class="f" textLength="101" lengthAdjust="spacingAndGlyphs">BranchName</text>
<text x="1322" y="500" class="f" textLength="48" lengthAdjust="spacingAndGlyphs">is (All)</text>
<text x="1322" y="550" class="f" textLength="96" lengthAdjust="spacingAndGlyphs">ProcessDate</text>
<text x="1322" y="577" class="f" textLength="48" lengthAdjust="spacingAndGlyphs">is (All)</text>
<text x="1322" y="627" class="f" textLength="162" lengthAdjust="spacingAndGlyphs">Sum of ClearBalance</text>
<text x="1322" y="654" class="f" textLength="48" lengthAdjust="spacingAndGlyphs">is (All)</text>
<text x="1367" y="718" class="f" textLength="160" lengthAdjust="spacingAndGlyphs">Add data fields here</text>
<text x="1310" y="804" class="f" textLength="149" lengthAdjust="spacingAndGlyphs">Filters on this page</text>
<text x="1367" y="864" class="f" textLength="160" lengthAdjust="spacingAndGlyphs">Add data fields here</text>
<text x="1310" y="947" class="f" textLength="145" lengthAdjust="spacingAndGlyphs">Filters on all pages</text>
</g>
<rect x="1589" y="317" width="8" height="513" rx="4" fill="#d6d5d3"/>

<!-- ============ Visualizations pane ============ -->
<rect x="1597.500" y="184" width="270.500" height="804" fill="#f3f2f1"/>
<rect x="1598" y="184" width="1" height="804" fill="#d2d0ce"/><rect x="1868" y="184" width="1" height="804" fill="#d2d0ce"/>
<text x="1611" y="222" font-size="23" style="stroke:#252423;stroke-width:.4" textLength="147" lengthAdjust="spacingAndGlyphs">Visualizations</text>
<path d="M1838 204L1846 213L1838 222M1847 204L1855 213L1847 222" fill="none" stroke="#252423" stroke-width="1.500"/>
<text x="1611" y="259" font-size="17" style="stroke:#252423;stroke-width:.3" textLength="91" lengthAdjust="spacingAndGlyphs">Build visual</text>
<rect x="1610" y="270" width="48" height="48" rx="3" fill="#d5d3d1"/>
<path d="M1616 277H1645" stroke="#333" stroke-width="1.300"/>
<rect x="1617" y="284.500" width="35" height="10" fill="#117865" stroke="#222" stroke-width="1" stroke-dasharray="2 1.500"/><rect x="1617" y="301" width="35" height="10" fill="#117865" stroke="#222" stroke-width="1" stroke-dasharray="2 1.500"/>
<!-- format icon -->
<g fill="none" stroke="#444" stroke-width="1.500"><path d="M1719 302V286H1728M1728 296V278H1738V292M1738 286H1747"/><path d="M1724 306Q1732 302 1736 296L1746 287L1751 289Q1748 298 1742 302Q1734 312 1724 306Z"/></g>
<!-- analytics icon -->
<g fill="none" stroke="#444" stroke-width="1.500"><circle cx="1830" cy="293" r="14.500"/><path d="M1816 296L1824 289L1830 293L1843 284M1822 300V306M1827 300V307M1832 300V307M1837 300V306M1841 304L1850 312" /></g>
<path d="M1851 312L1841 303" stroke="#444" stroke-width="2.500"/>
<path d="M1598 337H1622L1634 325.500L1646 337H1868" fill="none" stroke="#a19f9d" stroke-width="1.300"/>

<!-- viz grid -->
<g>
<g transform="translate(1614 354)"><path class="s" d="M.5 0V27.500H28"/><rect class="h" x="1" y="4" width="17" height="6"/><rect class="b" x="9" y="4" width="9" height="6"/><rect class="h" x="1" y="16" width="24" height="7"/><rect class="a" x="12" y="16" width="13" height="7"/></g>
<g transform="translate(1656 354)"><path class="s" d="M.5 0V27.500H28"/><rect class="h" x="6" y="8" width="6.500" height="19"/><rect class="b" x="6" y="8" width="6.500" height="10"/><rect class="h" x="18" y="4" width="7" height="23"/><rect class="a" x="18" y="4" width="7" height="12"/></g>
<g transform="translate(1698 354)"><path class="s" d="M.5 0V27.500H28"/><rect class="b" x="1" y="2" width="26" height="6"/><rect class="a" x="1" y="12" width="12" height="6"/><rect class="h" x="1" y="20" width="19" height="6"/></g>
<g transform="translate(1740 354)"><path class="s" d="M.5 0V27.500H28"/><rect class="b" x="2" y="1" width="7" height="26"/><rect class="h" x="10" y="12" width="6" height="15"/><rect class="a" x="19" y="8" width="7" height="19"/></g>
<g transform="translate(1782 354)"><path class="s" d="M.5 0V27.500H28"/><rect class="b" x="1" y="4" width="25" height="6"/><rect class="h" x="1" y="4" width="6" height="6"/><rect class="a" x="1" y="15" width="25" height="7"/><rect class="h" x="1" y="15" width="11" height="7"/></g>
<g transform="translate(1824 354)"><path class="s" d="M.5 0V27.500H28"/><rect class="h" x="6" y="3" width="7" height="24"/><rect class="b" x="6" y="3" width="7" height="18"/><rect class="h" x="18" y="3" width="7" height="24"/><rect class="a" x="18" y="3" width="7" height="8"/></g>

<g transform="translate(1614 396)"><path class="s" d="M.5 0V27.500H28"/><path d="M1 21L9 12L15 17L21 10L27 15" fill="none" stroke="#1b79c4" stroke-width="1.500"/><path d="M1 17L9 7L14 13L19 5L27 10" fill="none" stroke="#444" stroke-width="1.300"/></g>
<g transform="translate(1656 396)"><path d="M17 14L23 0L28 14V27H17Z" fill="#bdbdbb" stroke="#666"/><path d="M1 17L10 2L19 17Z" fill="#fff" stroke="#444" stroke-width="1.300"/><path d="M1 27V18L10 9L14 16L17 12L27 27Z" fill="#6cb0e8" stroke="#1b79c4" stroke-width="1.300"/></g>
<g transform="translate(1698 396)"><path class="s" d="M.5 0V27.500H28"/><path d="M1 27V17L11 24L20 13L28 22V27Z" fill="#fff"/><path d="M1 8L12 18L20 4L28 13V26L20 14L11 24L1 16Z" fill="#6cb0e8" stroke="#1b79c4"/></g>
<g transform="translate(1740 396)"><path class="s" d="M.5 0V27.500H28"/><rect class="b" x="6" y="4" width="7" height="23"/><rect class="a" x="18" y="4" width="7" height="23"/><path d="M2 26L9 17L15 23L27 9" fill="none" stroke="#333" stroke-width="1.500"/></g>
<g transform="translate(1782 396)"><path class="s" d="M.5 0V27.500H28"/><rect class="b" x="5" y="13" width="6" height="14"/><rect class="h" x="12" y="3" width="6" height="24"/><rect class="a" x="19" y="8" width="6" height="19"/><path d="M2 26L10 17L17 22L27 9" fill="none" stroke="#333" stroke-width="1.300"/></g>
<g transform="translate(1824 396)"><path class="s" d="M.5 0V27.500H28"/><path d="M2 4L8 10Q14 14 20 8L27 4V14L20 14Q14 20 8 16L2 13Z" fill="#9a9896" stroke="#666"/><rect x="3" y="16" width="6" height="5" fill="#d86b00"/><rect x="19" y="16" width="6" height="5" fill="#d86b00"/><path d="M3 15Q8 18 11 22Q15 26 20 21Q23 18 27 15" fill="none" stroke="#1b79c4" stroke-width="3"/></g>

<g transform="translate(1614 438)"><path class="s" d="M.5 0V27.500H28"/><rect class="h" x="4" y="12" width="6" height="15"/><rect class="h" x="10" y="9" width="6" height="18"/><path d="M16 18V2H19" fill="#6cb0e8" stroke="#1b79c4" stroke-width="1.500"/><rect x="15" y="7" width="6" height="11" fill="#1b79c4"/><rect class="h" x="21" y="3" width="5" height="24"/></g>
<g transform="translate(1656 438)"><path class="b" d="M1 3H27V11H22V19H18V27H10V19H6V11H1Z"/><path d="M1 11H27M6 19H22" stroke="#1b79c4" stroke-width="1.300"/></g>
<g transform="translate(1698 438)"><path class="s" d="M.5 0V27.500H28"/><rect x="5" y="5" width="4.500" height="4.500" fill="#6cb0e8"/><rect x="20" y="1" width="4.500" height="4.500" fill="#333"/><rect x="13" y="11" width="4.500" height="4.500" fill="#6cb0e8"/><rect x="6" y="19" width="4.500" height="4.500" fill="#333"/><rect x="21" y="16" width="4.500" height="4.500" fill="#6cb0e8"/></g>
<rect x="1736.500" y="434.500" width="35" height="35" fill="#d5d3d1" stroke="#8a8886"/>
<g transform="translate(1740 438)"><circle cx="14" cy="14" r="13.500" fill="#fff" stroke="#444" stroke-width="1.500"/><path d="M14 14V.5A13.500 13.500 0 0 1 25 22Z" fill="#6cb0e8" stroke="#1b79c4" stroke-width="1.300"/></g>
<g transform="translate(1782 438)"><circle cx="14" cy="14" r="10" fill="none" stroke="#6cb0e8" stroke-width="6"/><circle cx="14" cy="14" r="13.300" fill="none" stroke="#1b79c4" stroke-width="1.300"/><circle cx="14" cy="14" r="7" fill="none" stroke="#1b79c4" stroke-width="1.300"/><path d="M3 8A13 13 0 0 1 17 1" fill="none" stroke="#9a9896" stroke-width="5"/></g>
<g transform="translate(1824 438)"><rect class="b" x="1" y=".500" width="13" height="27"/><path d="M1 15H14" stroke="#1b79c4" stroke-width="1.500"/><rect class="h" x="14" y=".500" width="13" height="27"/><path d="M14 10H27M18 10V27.500M18 19H27" stroke="#444" stroke-width="1.200"/></g>

<g transform="translate(1614 480)"><circle cx="14" cy="13" r="9" fill="#fff" stroke="#444" stroke-width="1.200"/><path d="M9 9Q12 5 16 6L17 11L13 14L9 13ZM16 15L21 13L20 19L16 21Z" fill="#3a9a4f"/><path d="M7 3Q-1 13 7 21Q14 27 22 22M14 24V27M6 27.500H22" fill="none" stroke="#444" stroke-width="1.300"/></g>
<g transform="translate(1656 480)"><path d="M1 1L12 2L14 7L22 6L28 1V16L21 25L15 26L12 23L8 25L3 21L1 13Z" fill="#b5b4b2" stroke="#444" stroke-width="1.200"/><path d="M1 1H12L14 7L22 6L28 1V14L22 22L14 21V14L7 13L3 8Z" fill="#6cb0e8" stroke="#1b79c4" stroke-width="1.300"/><path d="M12 7L7 13L13 20" fill="none" stroke="#444" stroke-width=".8"/></g>
<g transform="translate(1698 480)"><path d="M1 19A13 13 0 0 1 27 19H21A7 7 0 0 0 7 19Z" fill="#fff" stroke="#1b79c4" stroke-width="1.300"/><path d="M14 6A13 13 0 0 1 27 19H21A7 7 0 0 0 14 12Z" fill="#6cb0e8" stroke="#1b79c4" stroke-width="1.300"/><path d="M1 19A13 13 0 0 1 6 9" fill="none" stroke="#666" stroke-width="1.500"/><path d="M12 20L19 13" stroke="#333" stroke-width="2.500"/></g>
<g transform="translate(1740 480)"><rect class="h" x=".500" y="2.500" width="27" height="21"/><path d="M3 26H25" stroke="#a19f9d" stroke-width="1.500"/><text x="3" y="19.500" font-size="13" style="fill:#2b88d8" textLength="22" lengthAdjust="spacingAndGlyphs">123</text></g>
<g transform="translate(1782 480)"><rect class="h" x=".500" y=".500" width="27" height="27"/><path d="M5 4V23" stroke="#a19f9d" stroke-width="1.500"/><path d="M8 7H23M8 13H18" stroke="#1b79c4" stroke-width="2.200"/><path d="M8 19H23" stroke="#a19f9d" stroke-width="2"/></g>
<g transform="translate(1824 480)"><rect class="h" x=".500" y="2.500" width="27" height="21"/><path d="M3 19L7 11L11 19Z" fill="#3a9a4f"/><path d="M15 9H25L20 18Z" fill="#d13438"/><path d="M3 21.500H25" stroke="#a19f9d" stroke-width="1.500"/></g>

<g transform="translate(1614 522)"><path d="M17 27H.5V.5H27V14" fill="#fff" stroke="#444" stroke-width="1.500"/><rect x="1" y="1" width="26" height="4" fill="#a19f9d"/><rect x="5" y="11" width="6" height="4.500" fill="#9a9896" stroke="#444" stroke-width=".7"/><rect x="5" y="19" width="6" height="4.500" fill="#9a9896" stroke="#444" stroke-width=".7"/><path d="M14 13H28L23 19V27H19V19Z" fill="#fff" stroke="#444" stroke-width="1.300"/></g>
<g transform="translate(1656 522)"><rect class="h" x=".500" y=".500" width="27" height="26"/><rect x="1" y="1" width="26" height="4" fill="#9a9896"/><path d="M1 12H27M1 19H27M9.500 5V27M18.500 5V27" stroke="#777"/></g>
<g transform="translate(1698 522)"><rect class="h" x=".500" y=".500" width="27" height="26"/><rect x="1" y="1" width="26" height="4" fill="#9a9896"/><rect x="9" y="5" width="9" height="7" fill="#fff"/><rect x="18.500" y="5" width="8.500" height="21" fill="#6cb0e8"/><rect x="1" y="12" width="17" height="7" fill="#6cb0e8"/><path d="M1 12H27M1 19H27M9.500 5V27M18.500 5V27" stroke="#444"/></g>
<text x="1745" y="548" font-size="21" style="fill:#2b7cb8;font-weight:700">R</text>
<text x="1781" y="549" font-size="23" style="fill:#2b88c8;font-weight:700" textLength="28" lengthAdjust="spacingAndGlyphs">Py</text>
<g transform="translate(1824 522)"><rect class="b" x="0.500" y="9" width="9" height="7"/><rect class="b" x="18" y="1" width="9.500" height="7"/><rect class="b" x="18" y="10" width="9.500" height="7"/><rect class="b" x="18" y="19" width="9.500" height="7"/><path d="M10 12.500H18M14 4.500V22.500H18M14 4.500H18" fill="none" stroke="#444" stroke-width="1.200"/></g>

<g transform="translate(1614 564)"><path d="M7 1H21V12Q21 19 14 19Q7 19 7 12Z" fill="#fff" stroke="#444" stroke-width="1.500"/><path d="M7 1H21V5H7Z" fill="#1b79c4"/><path d="M7 3H1V7Q1 12 8 13M21 3H27V7Q27 12 20 13M14 19V23M8 27H20V24H8Z" fill="none" stroke="#444" stroke-width="1.500"/><path d="M8 27H20V24H8Z" fill="#6cb0e8" stroke="#1b79c4"/></g>
<g transform="translate(1656 564)"><path d="M5 1.500H27V14L21 20L13 26.500H1V12" fill="#fff" stroke="#1b79c4" stroke-width="1.500"/><path d="M13 26L12 18L18 13L20 5L27 5V14L22 21L14 27Z" fill="#6cb0e8"/><path d="M.5 .5H8V9L4 16L.5 9Z" fill="#d86b00"/><circle cx="24" cy="24" r="3.800" fill="#d86b00"/><circle cx="27" cy="16" r="1.800" fill="#d86b00"/></g>
<g fill="#444"><circle cx="1702" cy="575" r="1.200"/><circle cx="1712" cy="575" r="1.200"/><circle cx="1722" cy="575" r="1.200"/></g>
</g>

<!-- expand tooltip -->
<path d="M1780 565Q1780 563 1782 563H1859Q1861 563 1861 565V573L1876 586L1861 599V608Q1861 610 1859 610H1782Q1780 610 1780 608Z" fill="#fff" style="filter:drop-shadow(0 2px 4px rgba(0,0,0,.18))"/>
<text x="1792" y="593" font-size="17" textLength="57" lengthAdjust="spacingAndGlyphs">Expand</text>
<rect x="1599" y="606" width="181" height="1" fill="#e1dfdd"/>

<!-- viz wells -->
<rect x="1859" y="609" width="9" height="248" rx="4" fill="#cfcecc"/>
<text x="1616" y="637" class="f" textLength="58" lengthAdjust="spacingAndGlyphs">Legend</text>
<rect x="1605" y="652" width="253" height="50" fill="#fff" stroke="#c8c6c4" stroke-dasharray="3 2"/>
<rect x="1609" y="655.500" width="246" height="33" rx="3" fill="#edebe9" stroke="#c8c6c4"/>
<text x="1616" y="677" class="f" textLength="101" lengthAdjust="spacingAndGlyphs">BranchName</text>
<text x="1616" y="737" class="f" textLength="50" lengthAdjust="spacingAndGlyphs">Values</text>
<rect x="1605" y="752" width="253" height="41" fill="#fff" stroke="#c8c6c4" stroke-dasharray="3 2"/>
<rect x="1609" y="755.500" width="246" height="33" rx="3" fill="#edebe9" stroke="#c8c6c4"/>
<text x="1615" y="778" class="f" textLength="162" lengthAdjust="spacingAndGlyphs">Sum of ClearBalance</text>
<text x="1616" y="827" class="f" textLength="53" lengthAdjust="spacingAndGlyphs">Details</text>
<rect x="1605" y="842" width="253" height="41" fill="#fff" stroke="#c8c6c4" stroke-dasharray="3 2"/>
<rect x="1609" y="845.500" width="246" height="33" rx="3" fill="#edebe9" stroke="#c8c6c4"/>
<text x="1616" y="868" class="f" textLength="96" lengthAdjust="spacingAndGlyphs">ProcessDate</text>
<text x="1616" y="917" class="f" textLength="62" lengthAdjust="spacingAndGlyphs">Tooltips</text>
<rect x="1605" y="932" width="253" height="40" fill="#fff" stroke="#c8c6c4" stroke-dasharray="3 2"/>
<text x="1620" y="957" class="f" textLength="159" lengthAdjust="spacingAndGlyphs">Add data fields here</text>
<g fill="none" stroke="#444" stroke-width="1.300">
<path d="M1809 667L1818 677L1827 667M1837 666L1848 677M1848 666L1837 677"/>
<path d="M1809 767L1818 777L1827 767M1837 767L1848 778M1848 767L1837 778"/>
<path d="M1809 857L1818 867L1827 857M1837 857L1848 868M1848 857L1837 868"/>
</g>

<!-- data pane -->
<path d="M1895 204L1887 213L1895 222M1904 204L1896 213L1904 222" fill="none" stroke="#252423" stroke-width="1.500"/>
<text transform="translate(1884 245) rotate(90)" font-size="22" style="stroke:#252423;stroke-width:.5" textLength="49" lengthAdjust="spacingAndGlyphs">Data</text>

<!-- page tabs -->
<rect x="61" y="936" width="1537" height="52" fill="#f3f2f1"/>
<rect x="120" y="936" width="144" height="46" fill="#fff"/>
<rect x="120" y="982" width="144" height="6" fill="#117865"/>
<g fill="#c8c6c4"><rect x="61" y="936" width="1" height="52"/><rect x="120" y="936" width="1" height="52"/><rect x="264" y="936" width="1" height="52"/><rect x="438" y="936" width="1" height="52"/><rect x="724" y="936" width="1" height="52"/><rect x="876" y="936" width="1" height="52"/><rect x="1137" y="936" width="1" height="52"/><rect x="1334" y="936" width="1" height="52"/><rect x="1516" y="936" width="1" height="52"/></g>
<path d="M76 956.500V968L69 962.200ZM103 956.500V968L110 962.200Z" fill="#252423"/>
<g font-size="18">
<text x="151.500" y="969" style="stroke:#252423;stroke-width:.35" textLength="82" lengthAdjust="spacingAndGlyphs">Operation</text>
<text x="295" y="969" textLength="113" lengthAdjust="spacingAndGlyphs">Trend Analysis</text>
<text x="469" y="969" textLength="225" lengthAdjust="spacingAndGlyphs">Bottom Branches By Deposit</text>
<text x="755" y="969" textLength="90" lengthAdjust="spacingAndGlyphs">Loan Menu</text>
<text x="906" y="969" textLength="200" lengthAdjust="spacingAndGlyphs">Tooltip Loan Outstanding</text>
<text x="1168" y="969" textLength="137" lengthAdjust="spacingAndGlyphs">Arrears Summary</text>
<text x="1366" y="969" textLength="120" lengthAdjust="spacingAndGlyphs">Tool tip Arrears</text>
</g>
<rect x="1540" y="937" width="57.500" height="49" fill="#117865"/>
<path d="M1568.500 954V970M1560.500 962H1576.500" stroke="#fff" stroke-width="3"/>

<!-- status bar -->
<rect x="0" y="988" width="1919" height="35" fill="#f3f2f1"/>
<rect x="0" y="988" width="1919" height="1" fill="#dcdad8"/>
<text x="8" y="1013" font-size="16.500" style="fill:#3b3a39" textLength="98" lengthAdjust="spacingAndGlyphs">Page 2 of 10</text>
<path d="M1590 1006.500H1596" stroke="#444" stroke-width="1.500"/>
<rect x="1603" y="1006.500" width="150" height="1" fill="#666"/><rect x="1645" y="998" width="6" height="17" fill="#555"/><rect x="1677" y="1003.500" width="1" height="7" fill="#666"/>
<path d="M1761 1006.500H1772M1766.500 1001V1012" stroke="#444" stroke-width="2"/>
<text x="1798" y="1012" font-size="16.500" style="fill:#605e5c" textLength="34" lengthAdjust="spacingAndGlyphs">64%</text>
<rect x="1862.500" y="998.500" width="23" height="17" fill="none" stroke="#555" stroke-width="1.500"/>
<path d="M1868 1006V1002.500H1871M1880 1006V1002.500H1877M1868 1008V1011.500H1871M1880 1008V1011.500H1877" fill="none" stroke="#555" stroke-width="1.200"/>
</svg>
</body></html>
